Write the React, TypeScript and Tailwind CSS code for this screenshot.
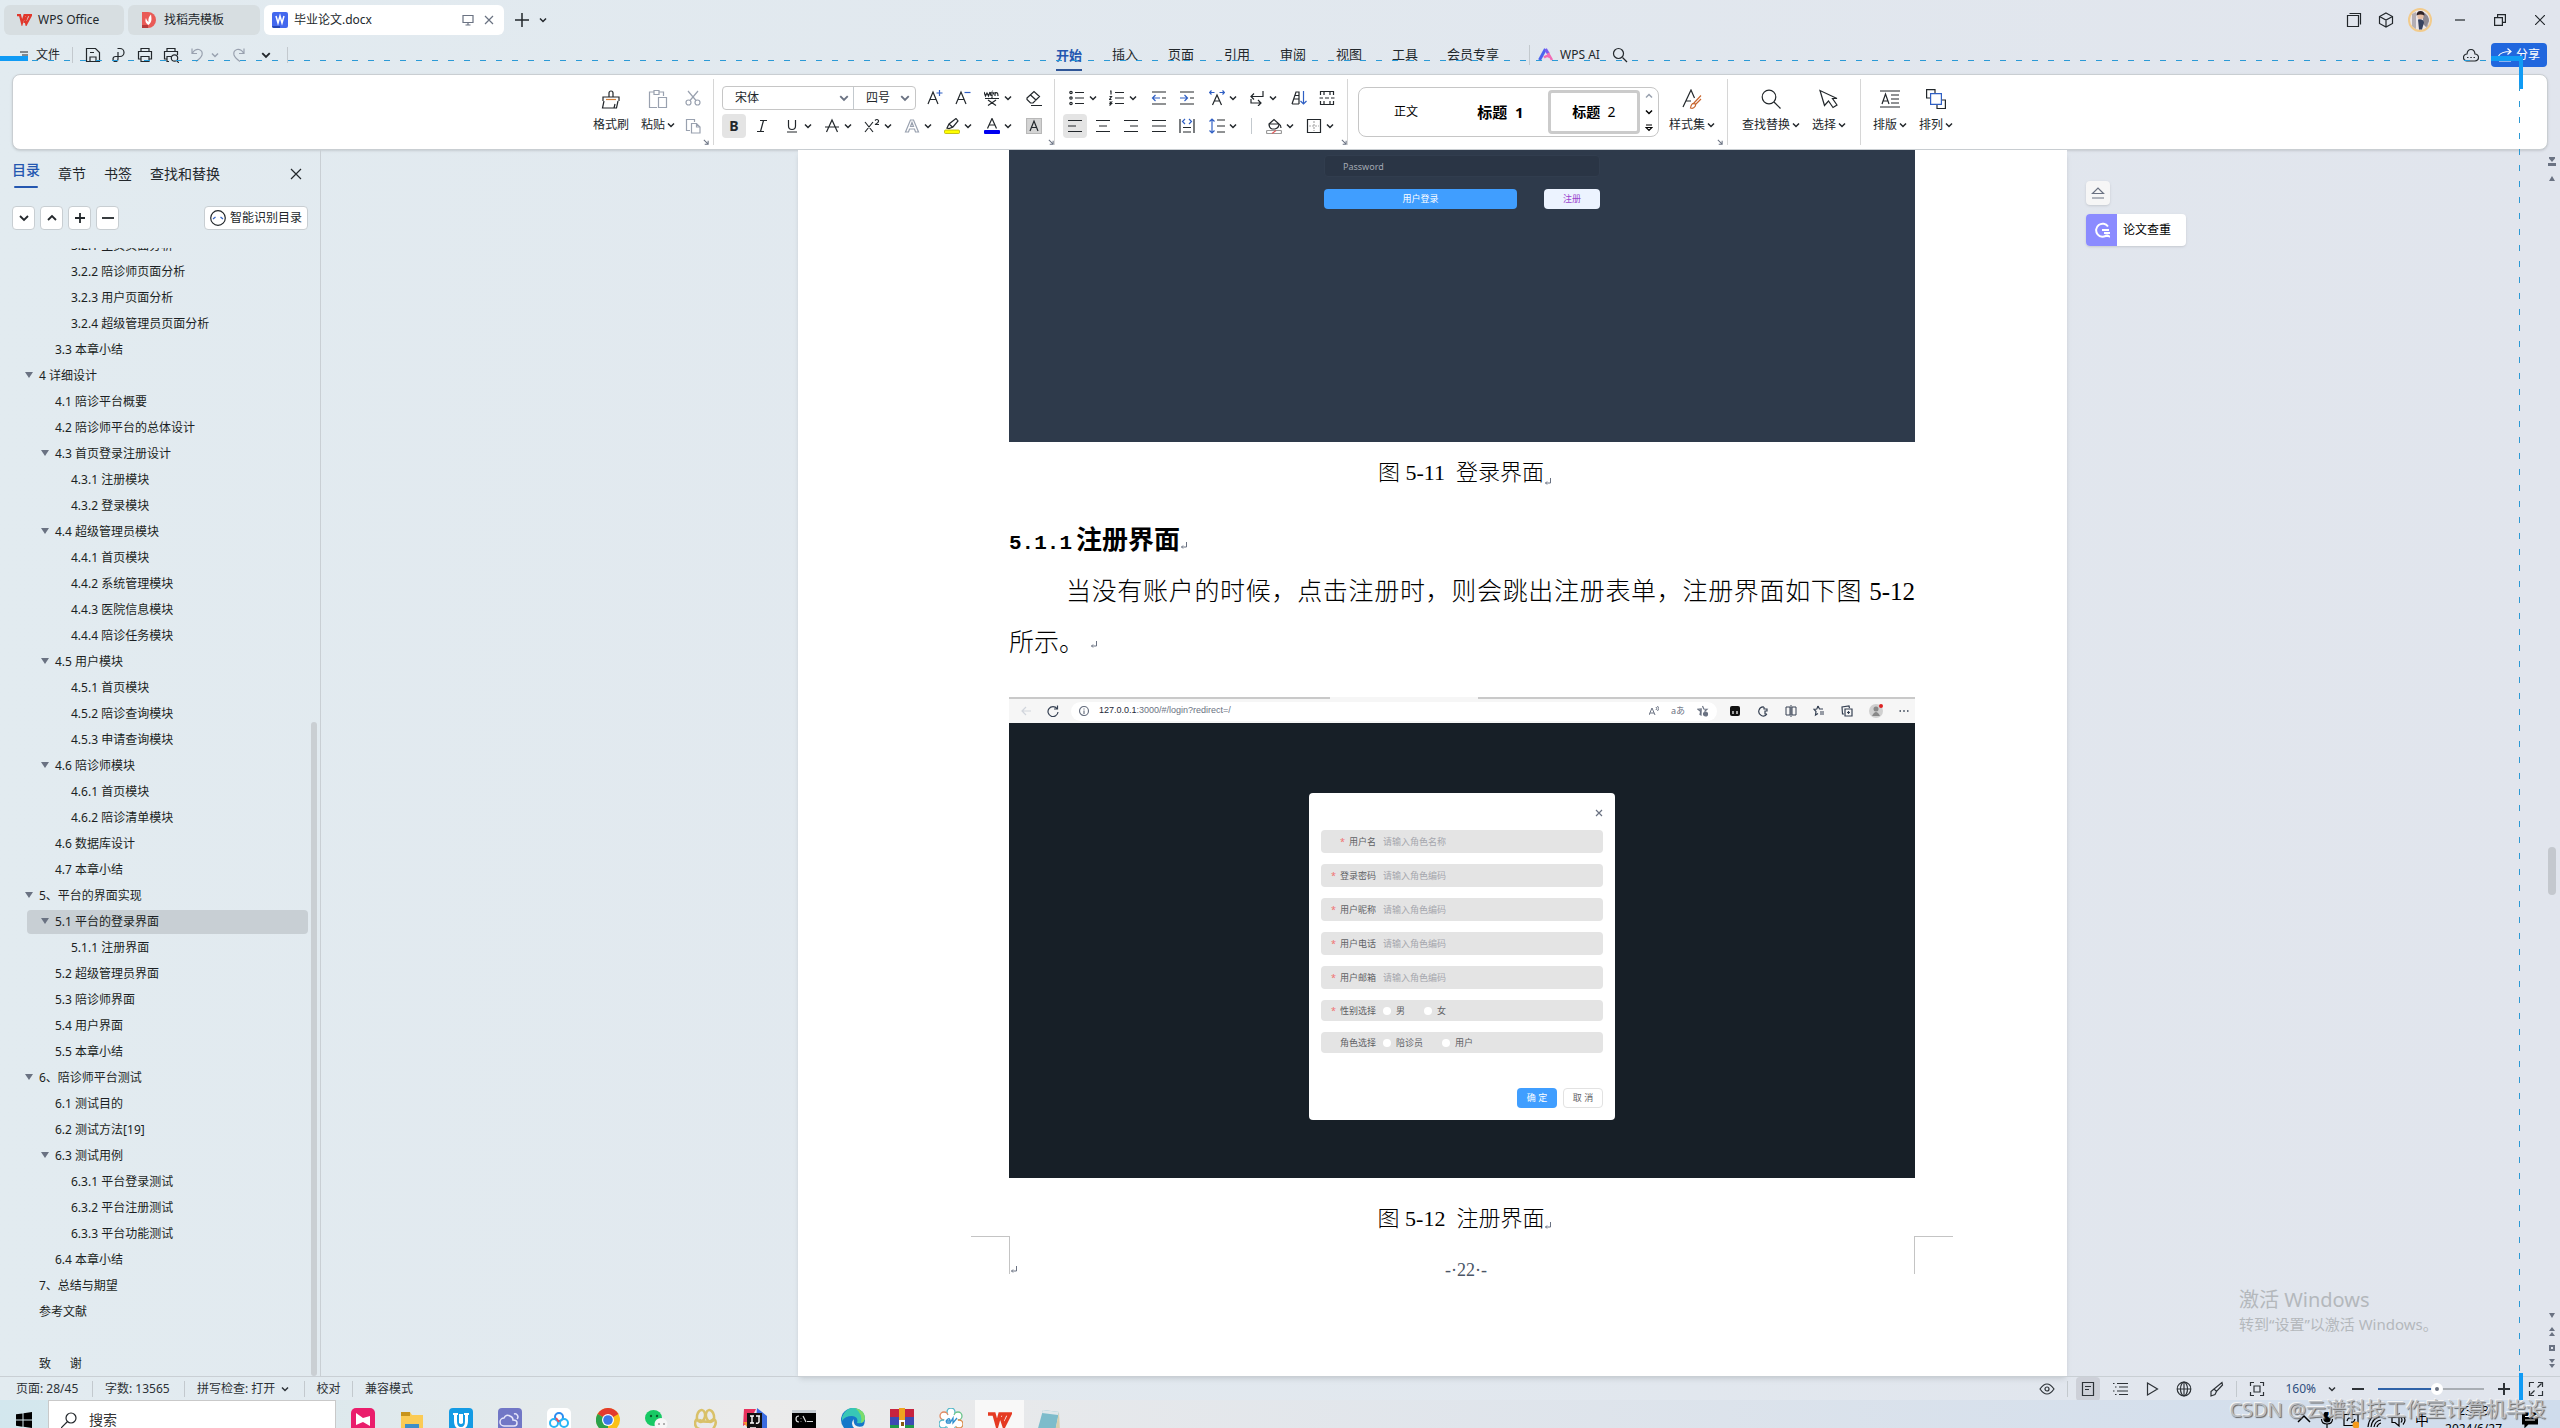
import type { ReactNode } from "react"
import clsx from "clsx"

type IconProps = { children: ReactNode; size?: string; box?: string; className?: string }

const Icon = ({ children, size = "size-5", box = "0 0 20 20", className = "" }: IconProps) => (
  <svg viewBox={box} fill="none" stroke="currentColor" strokeWidth="1.2" className={clsx("shrink-0", size, className)} aria-hidden="true">
    {children}
  </svg>
)

const Chevron = ({ size = "size-2", className = "" }: { size?: string; className?: string }) => (
  <Icon size={size} box="0 0 8 8" className={className}>
    <path d="M1 2.500 4 5.500 7 2.500" strokeWidth="1.500" />
  </Icon>
)

const Corner = () => (
  <Icon size="size-1.5" box="0 0 7 7" className="mb-1 self-end text-gray-500">
    <path d="M1 1 6 6M6 2v4H2" />
  </Icon>
)

const Rule = ({ className = "h-4" }: { className?: string }) => <div className={clsx("w-px shrink-0 bg-[#c3c9ce]", className)} />

// paragraph mark
const Mark = ({ className = "" }: { className?: string }) => (
  <Icon size="size-2" box="0 0 8 8" className={clsx("inline-block text-gray-500", className)}>
    <path d="M6.500 0v5H1.500M3 3.500 1.500 5 3 6.500" strokeWidth="1" />
  </Icon>
)

/* ---------- title bar ---------- */

const TitleBar = () => (
  <div className="flex h-10 shrink-0 items-center pl-1 text-[13px]">
    <div className="flex gap-1">
      <button className="flex h-[30px] w-[120px] items-center gap-1.5 rounded-md bg-[#d7dee1] pl-3 text-xs">
        <Icon size="w-4 h-3" box="0 0 16 12">
          <path d="M1 1.200h3L6 9l2.500-7.800h2.800L8.500 9M8.500 3l1.800 7L15 1.200h-3.500" stroke="#e1382c" strokeWidth="2.200" />
        </Icon>
        WPS Office
      </button>
      <button className="flex h-[30px] w-[132px] items-center gap-2 rounded-md bg-[#d7dee1] pl-3.5 text-xs">
        <Icon size="w-3.5 h-4" box="0 0 14 16">
          <path d="M0 0h6a8 8 0 0 1 0 16H0z" fill="#e95a56" stroke="none" />
          <path d="M0 13h6v3H0z" fill="#b83a3a" stroke="none" />
          <path d="M6.500 13C3 11 3 8 4 6c.5 2 1.500 3 2.500 4C6 7 7 4 9 2.500 9.500 6 10.500 10 6.500 13z" fill="#fff" stroke="none" />
        </Icon>
        找稻壳模板
      </button>
      <div className="flex h-[30px] w-60 items-center rounded-md bg-white pl-2">
        <Icon size="size-4" box="0 0 16 16">
          <rect width="16" height="16" rx="2" fill="#4368ee" stroke="none" />
          <path d="M0 14h8v2H2q-2 0-2-2z" fill="#2446b5" stroke="none" />
          <path d="m4 4 2 7 2-7 2 7 2-7" stroke="#fff" strokeWidth="1.500" />
        </Icon>
        <span className="ml-1.5 flex-1 text-xs">毕业论文.docx</span>
        <Icon size="size-3" box="0 0 12 12" className="text-gray-500">
          <path d="M1 1.500h10v7H1zM3.500 11h5M6 8.500V11" />
        </Icon>
        <button aria-label="关闭文档" className="mx-2.5 text-gray-500">
          <Icon size="size-2.5" box="0 0 10 10"><path d="m1 1 8 8M9 1 1 9" /></Icon>
        </button>
      </div>
    </div>
    <button aria-label="新建" className="ml-[11px]">
      <Icon size="size-3.5" box="0 0 14 14"><path d="M7 0v14M0 7h14" strokeWidth="1.500" /></Icon>
    </button>
    <Chevron className="ml-2.5" />
    <div className="ml-auto flex items-center">
      <Icon size="size-4" box="0 0 16 16" className="mr-4"><path d="M1.500 3.500h11v11h-11zM3.500 1.500h11v11" /></Icon>
      <Icon size="size-4" box="0 0 16 16" className="mr-3.5"><path d="m8 1 6.500 3.500v7L8 15l-6.500-3.500v-7zM1.500 4.500 8 8l6.500-3.500M8 8v7" /></Icon>
      <Icon size="size-6" box="0 0 24 24" className="mr-2">
        <circle cx="12" cy="12" r="11" fill="#ece6e8" stroke="#f2cb8c" strokeWidth="2" />
        <path d="M4 6v12q2 2 4 3V4zM18 8l3 3-1 7-2 2z" fill="#b4aeb4" stroke="none" />
        <path d="M15 4q6 3 6 9l-3 6-3-3z" fill="#8d8891" stroke="none" />
        <circle cx="12.500" cy="8" r="3.200" fill="#e7bfa6" stroke="none" />
        <path d="M8.500 7.500q0-4.500 4-4.500t4 4.500q-4-2-8 0z" fill="#302327" stroke="none" />
        <path d="M10 11.500q5-1 6 3l-2 7h-3z" fill="#38435f" stroke="none" />
      </Icon>
      <button aria-label="最小化" className="flex w-10 justify-center"><Icon size="size-2.5" box="0 0 10 10"><path d="M0 5h10" /></Icon></button>
      <button aria-label="还原" className="flex w-10 justify-center"><Icon size="size-3" box="0 0 12 12"><path d="M.6 3.600h7.800v7.800H.6zM3.600 3.600v-3h7.800v7.800h-3" /></Icon></button>
      <button aria-label="关闭" className="flex w-10 justify-center"><Icon size="size-2.5" box="0 0 10 10"><path d="m0 0 10 10M10 0 0 10" /></Icon></button>
    </div>
  </div>
)

/* ---------- menu row ---------- */

const menus = ["插入", "页面", "引用", "审阅", "视图", "工具", "会员专享"]

const MenuRow = () => (
  <div className="grid h-[34px] shrink-0 grid-cols-[1041fr_600px_919fr] items-start pt-[3px] text-[13px]">
    <div className="flex h-6 items-center pl-5">
      <Icon size="size-2" box="0 0 8 8" className="mr-2"><path d="M0 1h8M2 4h6M0 7h8" /></Icon>
      <button className="w-6 text-xs">文件</button>
      <Rule className="mr-3 ml-3 h-4" />
      <Icon size="size-4" box="0 0 16 16"><path d="M1.500 13.500v-12h9l4 4v9h-13zM5 14.500V10h6v4.500M5 5.500h4" /></Icon>
      <Icon size="size-4" box="0 0 16 16" className="ml-2.5"><path d="M6.500 1.500H9a4 4 0 0 1 0 8H4.500a2.500 2.500 0 1 0 2.500 2.500V5" /></Icon>
      <Icon size="size-4" box="0 0 16 16" className="ml-2.5"><path d="M4 4.500v-3h8v3M4 12H1.500V4.500h13V12H12M4 9.500h8v5H4z" /></Icon>
      <Icon size="size-4" box="0 0 16 16" className="ml-2.5"><path d="M4 4.500v-3h8v3M4 12H1.500V4.500h13V8M6 14.500H4v-5h4M14 14l2 2" /><circle cx="11.500" cy="11" r="3.200" /></Icon>
      <Icon size="size-4" box="0 0 16 16" className="ml-2.5 text-gray-400"><path d="M3 1.500v5h5M3.500 6Q6 1.800 10 2.500q4 1.200 3 5.500-1 3-6 6.500" /></Icon>
      <Chevron className="ml-1.5 text-gray-400" />
      <Icon size="size-4" box="0 0 16 16" className="ml-3 text-gray-400"><path d="M13 1.500v5H8M12.500 6Q10 1.800 6 2.500q-4 1.200-3 5.500 1 3 6 6.500" /></Icon>
      <Chevron size="size-2.5" className="ml-3.5" />
      <Rule className="ml-4 h-4" />
    </div>
    <div className="flex items-start">
      <button className="flex h-7 w-14 flex-col items-center justify-between font-bold text-[#2457b0]">
        <span className="leading-6">开始</span>
        <span className="h-0.5 w-[26px] bg-[#2f5597]" />
      </button>
      {menus.map((m) => (
        <button key={m} className={clsx("flex h-6 items-center justify-center", m.length > 2 ? "w-20" : "w-14")}>{m}</button>
      ))}
      <div className="flex h-6 items-center">
        <Rule className="mr-2 ml-4 h-5" />
        <Icon size="size-4" box="0 0 16 16">
          <path d="m1.500 13 6-11" stroke="#4b63f0" strokeWidth="3" />
          <path d="m7.500 2 3 5" stroke="#7a5cf0" strokeWidth="3" />
          <path d="m10 6 4 7M6 10.500q4-3 6 0" stroke="#f26bb5" strokeWidth="2.500" />
        </Icon>
        <button className="ml-1 h-6 w-11 text-xs whitespace-nowrap">WPS AI</button>
        <Icon size="size-4" box="0 0 16 16" className="ml-2.5"><circle cx="6.500" cy="6.500" r="5" /><path d="m10.500 10.500 4.500 4.500" /></Icon>
      </div>
    </div>
    <div className="flex items-center justify-end gap-3 pr-[13px]">
      <Icon size="size-4" box="0 0 16 16"><path d="M4 14q-3.500-.5-3.500-3.500T4 7q.5-4.500 4-4.500T12 7q3.500.5 3.500 3.500T12 14zM4 10.500h1.500M7.300 10.500h1.500M10.500 10.500H12" /></Icon>
      <button className="flex h-6 w-14 items-center justify-center gap-1 rounded bg-[#2167de] text-xs text-white">
        <Icon size="size-3.5" box="0 0 14 14"><path d="M.5 8Q3 3.500 12.500 3.500M9.500.5l3.500 3-3.500 3M1 13h12" /></Icon>
        分享
      </button>
    </div>
  </div>
)

/* ---------- ribbon ---------- */

const Tool = ({ label, children, wide, on }: { label: string; children: ReactNode; wide?: boolean; on?: boolean }) => (
  <button
    aria-label={label}
    className={clsx("flex h-6 shrink-0 items-center", wide ? "w-10 gap-1 pl-1.5" : on ? "w-6 justify-center rounded bg-[#e4e4e4]" : "w-7 justify-center")}
  >
    {children}
    {wide && <Chevron />}
  </button>
)

const BigTool = ({ label, children, arrow = true }: { label: string; children: ReactNode; arrow?: boolean }) => (
  <button className="flex flex-col items-center gap-1.5">
    {children}
    <span className="flex items-center gap-0.5 text-xs leading-5">
      {label}
      {arrow && <Chevron />}
    </span>
  </button>
)

const S = ({ children, className = "" }: { children: ReactNode; className?: string }) => (
  <Icon size="size-4" box="0 0 16 16" className={className}>{children}</Icon>
)

const blue = "#2f5fc4"

const Ribbon = () => (
  <div className="mx-3 flex h-[76px] shrink-0 items-stretch justify-center rounded-lg border border-[#c9ced2] bg-white pr-4 shadow-sm">
    <div className="flex items-center pl-0.5">
      <BigTool label="格式刷" arrow={false}>
        <Icon><path d="M8 8V4a2 2 0 0 1 4 0v4M2 12V8h16v4M3 12 1.500 19h14L17 12M13 19l1-4" /><path d="M5 10.500h10" stroke="#d3813c" /></Icon>
      </BigTool>
      <div className="ml-3">
        <BigTool label="粘贴">
          <Icon className="text-gray-400"><path d="M6 3H1.500v15.500H9M6 1.500h5v4H6zM11 3h4.500v4M10.500 8.500h8v10h-8z" /></Icon>
        </BigTool>
      </div>
      <div className="ml-2.5 flex flex-col gap-3">
        <S className="text-gray-400"><circle cx="3.500" cy="12.500" r="2.500" /><circle cx="12.500" cy="12.500" r="2.500" /><path d="m3 1 8 9.500M13 1l-8 9.500" /></S>
        <S className="text-gray-400"><path d="M5 12.500H1.500v-11h8V4M6.500 5.500h5l3.500 3.500v6H6.500zM11.500 5.500V9H15" /></S>
      </div>
    </div>
    <div className="flex pl-0.5"><Corner /></div>
    <Rule className="my-1 ml-1 bg-[#d6d6d6]" />

    <div className="flex flex-col justify-center gap-1 pl-2">
      <div className="flex items-center">
        <div className="mr-[5px] flex h-6 w-[194px] items-center rounded border border-[#c6c6c6] text-xs">
          <select aria-label="字体" className="h-full w-[108px] appearance-none pl-3"><option>宋体</option></select>
          <Chevron size="size-2.5" className="mr-1 ml-2 text-gray-500" />
          <Rule className="h-full" />
          <select aria-label="字号" className="h-full w-[46px] appearance-none pl-3"><option>四号</option></select>
          <Chevron size="size-2.5" className="text-gray-500" />
        </div>
        <Tool label="增大字号"><S><path d="m1 14 5-12 5 12M2.800 9.500h6.400" /><path d="M12.500 0v6M9.500 3h6" stroke={blue} /></S></Tool>
        <Tool label="减小字号"><S><path d="m1 14 5-12 5 12M2.800 9.500h6.400" /><path d="M9.500 2.500h6" stroke={blue} /></S></Tool>
        <div className="pl-px"><Tool label="拼音指南" wide><S><path d="m0 2 1.500 4L3 3l1.500 3L6 2M6.500 4h3q0-2-1.500-2T6.500 4 9 6M11 6V2M11 3.500Q14 1 14 6M8 0l2-1M1 8.500h14M8 7v1.500M4 10l8 5.500M12 10l-8 5.500" /></S></Tool></div>
        <div className="pl-0.5"><Tool label="清除格式"><S><path d="m1 8 7-6.500 5.500 5L7 13H4.500L1 9.500zM4.500 5 10 10M5 15.500h11" /></S></Tool></div>
      </div>
      <div className="flex items-center">
        <Tool label="加粗" on><span className="text-sm font-bold">B</span></Tool>
        <div className="px-0.5"><Tool label="倾斜"><S><path d="M6 2.500h7M3 13.500h7M9.500 2.500l-3 11" /></S></Tool></div>
        <Tool label="下划线" wide><S><path d="M4.500 2v6q0 3.500 3.500 3.500T11.500 8V2M3 14h10" /></S></Tool>
        <Tool label="删除线" wide><S><path d="M2.500 14 8 2l5.500 12M1 9h14" /></S></Tool>
        <Tool label="上标" wide><S><path d="m1 4 8 10M9 4 1 14M11 2.500q2-2 3.500 0 .5 2-3.500 4h4" /></S></Tool>
        <Tool label="文字效果" wide><S className="text-gray-400"><path d="M1.500 14 6.500 2h3l5 12h-3l-1-3h-5l-1 3zM6.500 8.500h3L8 4.500z" /></S></Tool>
        <Tool label="突出显示" wide><S><path d="m3 10 2-4 7-5.500 2 2.500-5 6-4 1.500zM5 6l4 3.500" /><rect x=".5" y="12" width="15" height="3.500" rx="1" fill="#ffff00" stroke="#b8b000" strokeWidth=".8" /></S></Tool>
        <Tool label="字体颜色" wide><S><path d="m3.500 10.500 4.500-10 4.500 10M5 7h6" /><rect y="12" width="16" height="4" rx="1" fill="#0000f0" stroke="none" /></S></Tool>
        <div className="pl-0.5"><Tool label="字符底纹"><S><path d="M.5.500h15v15H.500z" fill="#d4d4d4" stroke="#b8b8b8" /><path d="m4 13 4-10 4 10M5.500 9.500h5" /></S></Tool></div>
      </div>
    </div>
    <Corner />
    <Rule className="my-1 bg-[#d6d6d6]" />

    <div className="flex flex-col justify-center gap-1 pl-2">
      <div className="flex items-center">
        <Tool label="项目符号" wide><S><path d="M6 2.500h9M6 8h9M6 13.500h9" /><circle cx="2" cy="2.500" r="1.200" /><circle cx="2" cy="8" r="1.200" /><circle cx="2" cy="13.500" r="1.200" /></S></Tool>
        <Tool label="编号" wide><S><path d="M6 2.500h9M6 8h9M6 13.500h9M1 1h1v3.500M.5 6.500h2L.5 9.500h2M.5 12h2L1 13.500h1.500L.5 15.500" /></S></Tool>
        <div className="pl-0.5"><Tool label="减少缩进"><S><path d="M1 2h14M11 8h4M1 14h14" /><path d="M9 8H1.500M4.500 5l-3 3 3 3" stroke={blue} /></S></Tool></div>
        <Tool label="增加缩进"><S><path d="M1 2h14M11 8h4M1 14h14" /><path d="M1 8h7.500M5.500 5l3 3-3 3" stroke={blue} /></S></Tool>
        <div className="pl-0.5"><Tool label="中文版式" wide><S><path d="m3.500 15 4.500-10 4.500 10M5 11h6" /><path d="M5.500 2.500H.5M2.500.5l-2 2 2 2M10.500 2.500h5M13.500.5l2 2-2 2" stroke={blue} /></S></Tool></div>
        <Tool label="换行" wide><S><path d="M14 1v5.500H2M5 3.500l-3 3 3 3M2 9v4h10M9 10l3 3-3 3" /></S></Tool>
        <div className="pl-0.5"><Tool label="排序"><S><path d="M1 14 5 2h3v12M2.500 9H8M4 5.500h4M1 14h7" /><path d="M12.500 1v13M9.500 11l3 3 3-3" stroke={blue} /></S></Tool></div>
        <Tool label="边框显示"><S><path d="M1.500 5V1.500H14.500V5M1.500 11v3.500h13V11M5 1.500V5M11 1.500V5M5 14.500V11M11 14.500V11M.5 8H4M6 8h4M12 8h3.500" /></S></Tool>
      </div>
      <div className="flex items-center">
        <Tool label="左对齐" on><S><path d="M1 2.500h14M1 8h8M1 13.500h14" /></S></Tool>
        <div className="pl-0.5"><Tool label="居中"><S><path d="M1 2.500h14M4 8h8M1 13.500h14" /></S></Tool></div>
        <Tool label="右对齐"><S><path d="M1 2.500h14M7 8h8M1 13.500h14" /></S></Tool>
        <Tool label="两端对齐"><S><path d="M1 2.500h14M1 8h14M1 13.500h14" /></S></Tool>
        <Tool label="分散对齐"><S><path d="M1 1v14M15 1v14M4 9.500h8M4 14h8" /><path d="m6 1-2.500 2.500L6 6M10 1l2.500 2.500L10 6" stroke={blue} /></S></Tool>
        <div className="pl-0.5"><Tool label="行距" wide><S><path d="M8 2h8M8 8h8M8 14h8" /><path d="M3 1v14M.5 3.500 3 1l2.500 2.500M.5 12.500 3 15l2.500-2.500" stroke={blue} /></S></Tool></div>
        <Rule className="mx-2 h-4" />
        <Tool label="底纹" wide><S><path d="m3 6 5-4.500L13 6q0 4-4 5H6Q3 10 3 6zM3 6h10M13 6q2 1 2 4" /><rect x=".5" y="12.500" width="15" height="3" rx="1" stroke="#999" /><path d="m6 15.500 4-3" stroke="#e05a5a" /></S></Tool>
        <Tool label="边框" wide><S><path d="M1.500 1.500h13v13h-13z" /><path d="M8 3v10M3 8h10" stroke="#aaa" strokeDasharray="2 1" /></S></Tool>
      </div>
    </div>
    <Corner />
    <Rule className="my-1 bg-[#d6d6d6]" />

    <div className="my-3 ml-2.5 flex w-[301px] items-center rounded-lg border border-[#c6c6c6] text-xs text-black">
      <button className="w-[94px]">正文</button>
      <button className="flex-1 text-[15px] font-bold">标题&nbsp;&nbsp;1</button>
      <button className="h-11 w-[92px] rounded border-3 border-[#cbcbcb] text-sm"><b>标题</b>&nbsp;&nbsp;2</button>
      <div className="flex w-[18px] flex-col items-center gap-2">
        <Chevron className="rotate-180 text-gray-400" />
        <Chevron />
        <Icon size="size-2" box="0 0 8 8"><path d="M1 1h6M1 3.500h6L4 6.500z" /></Icon>
      </div>
    </div>
    <div className="flex items-center pr-0.5 pl-2.5">
      <BigTool label="样式集">
        <Icon><path d="m1 18 8-17 3.500 8M4 12h5" /><path d="M19 6.500 11 15M19 10l-6 6M8.500 19q1-5 3.500-4.500t1 3-4.500 1.500z" stroke="#c9662f" /></Icon>
      </BigTool>
    </div>
    <Corner />
    <Rule className="my-1 ml-1 bg-[#d6d6d6]" />
    <div className="flex items-center gap-3 px-3.5">
      <BigTool label="查找替换"><Icon><circle cx="8" cy="8" r="6.800" /><path d="m13 13 6.500 6.500" /></Icon></BigTool>
      <BigTool label="选择"><Icon><path d="m1 1.500 4.500 15 4-4.500 4.500 6.500 4-2.500-4.500-6.500h4.500z" /></Icon></BigTool>
    </div>
    <Rule className="my-1 bg-[#d6d6d6]" />
    <div className="flex items-center gap-3 pl-3">
      <BigTool label="排版"><Icon><path d="M0 2h20M0 18h20M2 15 5.500 5 9 15M3 12h5M11 6h8M11 10h8M11 14h8" /></Icon></BigTool>
      <BigTool label="排列"><Icon><path d="M4.500 9H.6V.6H9v4M11 15.500v4h8.400V11h-4" /><path d="M4.600 4.600h10.800v10.800H4.600z" stroke={blue} /></Icon></BigTool>
    </div>
  </div>
)

/* ---------- outline sidebar ---------- */

type Node = [level: number, text: string, open?: boolean]

const outline: Node[] = [
  [2, "3.2.1 主页页面分析"],
  [2, "3.2.2 陪诊师页面分析"],
  [2, "3.2.3 用户页面分析"],
  [2, "3.2.4 超级管理员页面分析"],
  [1, "3.3 本章小结"],
  [0, "4 详细设计", true],
  [1, "4.1 陪诊平台概要"],
  [1, "4.2 陪诊师平台的总体设计"],
  [1, "4.3 首页登录注册设计", true],
  [2, "4.3.1 注册模块"],
  [2, "4.3.2 登录模块"],
  [1, "4.4 超级管理员模块", true],
  [2, "4.4.1 首页模块"],
  [2, "4.4.2 系统管理模块"],
  [2, "4.4.3 医院信息模块"],
  [2, "4.4.4 陪诊任务模块"],
  [1, "4.5 用户模块", true],
  [2, "4.5.1 首页模块"],
  [2, "4.5.2 陪诊查询模块"],
  [2, "4.5.3 申请查询模块"],
  [1, "4.6 陪诊师模块", true],
  [2, "4.6.1 首页模块"],
  [2, "4.6.2 陪诊清单模块"],
  [1, "4.6 数据库设计"],
  [1, "4.7 本章小结"],
  [0, "5、平台的界面实现", true],
  [1, "5.1 平台的登录界面", true],
  [2, "5.1.1 注册界面"],
  [1, "5.2 超级管理员界面"],
  [1, "5.3 陪诊师界面"],
  [1, "5.4 用户界面"],
  [1, "5.5 本章小结"],
  [0, "6、陪诊师平台测试", true],
  [1, "6.1 测试目的"],
  [1, "6.2 测试方法[19]"],
  [1, "6.3 测试用例", true],
  [2, "6.3.1 平台登录测试"],
  [2, "6.3.2 平台注册测试"],
  [2, "6.3.3 平台功能测试"],
  [1, "6.4 本章小结"],
  [0, "7、总结与期望"],
  [0, "参考文献"],
  [0, ""],
  [0, "致      谢"],
]

const indents = ["pl-6", "pl-10", "pl-14"]

const Sidebar = () => (
  <aside className="flex w-[321px] shrink-0 flex-col border-r border-[#c9cfd4]">
    <div className="flex h-12 items-center gap-[18px] pl-3 text-sm">
      <button className="flex h-7 flex-col items-center justify-between font-medium text-[#2457b0]">
        <span>目录</span>
        <span className="h-0.5 w-6 rounded bg-[#2457b0]" />
      </button>
      <button>章节</button>
      <button>书签</button>
      <button>查找和替换</button>
      <button aria-label="关闭目录" className="mr-[18px] ml-auto">
        <Icon size="size-3" box="0 0 12 12"><path d="m1 1 10 10M11 1 1 11" /></Icon>
      </button>
    </div>
    <div className="flex h-10 items-center gap-[5px] pr-3 pl-3">
      {[
        ["展开", "M2 4l4 4 4-4"],
        ["收起", "M2 8l4-4 4 4"],
        ["增加级别", "M6 1v10M1 6h10"],
        ["降低级别", "M0 6h12"],
      ].map(([label, d]) => (
        <button key={label} aria-label={label} className="flex h-6 w-[23px] items-center justify-center rounded border border-[#c8ced2] bg-white">
          <Icon size="size-3" box="0 0 12 12"><path d={d} strokeWidth="1.800" /></Icon>
        </button>
      ))}
      <button className="ml-auto flex h-6 items-center gap-1 rounded border border-[#c8ced2] bg-white px-[5px] text-xs">
        <Icon size="size-4" box="0 0 16 16"><circle cx="8" cy="8" r="7.300" /><path d="M3 9l2.500-2M13 9l-2.500-2" stroke={blue} /></Icon>
        智能识别目录
      </button>
    </div>
    <div className="mt-2.5 flex min-h-0 flex-1 overflow-hidden">
      <ul className="-mt-[15px] flex-1 pl-[15px] text-xs whitespace-pre text-[#1b1f23]">
        {outline.map(([level, text, open], i) => (
          <li key={i} className={clsx("flex h-[26px] items-center", indents[level])}>
            <button className={clsx("relative text-left", text.startsWith("5.1 ") && "-mr-1 -ml-7 h-6 flex-1 rounded bg-[#c8cfd4] pl-7")}>
              {text}
              {open && (
                <svg viewBox="0 0 8 6" className={clsx("absolute h-1.5 w-2 fill-gray-500", text.startsWith("5.1 ") ? "top-2 left-3.5" : "top-1 -left-3.5")} aria-hidden="true">
                  <path d="M0 0h8L4 6z" />
                </svg>
              )}
            </button>
          </li>
        ))}
      </ul>
      <div className="flex w-4 flex-col justify-end pl-[7px]">
        <div className="h-[58%] w-1.5 rounded bg-[#cacfd3]" />
      </div>
    </div>
  </aside>
)

/* ---------- document ---------- */

const LoginShot = () => (
  <div className="flex h-[292px] flex-col items-center bg-[#2e3a4b] pt-[5px] font-['Noto_Sans','Noto_Sans_CJK_SC',sans-serif] text-[9px] font-normal">
    <div className="w-[276px]">
      <input aria-label="密码" placeholder="Password" className="block h-[22px] w-full rounded border border-[#313d4e] bg-[#2a3545] pl-4.5 placeholder:text-[#a3a9b3]" />
      <div className="mt-3 flex justify-between">
        <button className="h-5 w-[193px] rounded-sm bg-[#409eff] text-white">用户登录</button>
        <button className="h-5 w-14 rounded-sm bg-[#ecf3ff] text-[#9b45cf]">注册</button>
      </div>
    </div>
  </div>
)

const fields = [
  ["用户名", "请输入角色名称"],
  ["登录密码", "请输入角色编码"],
  ["用户昵称", "请输入角色编码"],
  ["用户电话", "请输入角色编码"],
  ["用户邮箱", "请输入角色编码"],
]

const Star = () => <span className="mr-1 text-[#f07070]">*</span>

const RegisterForm = () => (
  <form className="h-[327px] w-[306px] rounded-sm bg-white px-3 pt-3.5 text-[#5f6165]">
    <div className="flex h-[23px] justify-end pt-0.5 text-gray-500">
      <Icon size="size-2" box="0 0 8 8"><path d="m1 1 6 6M7 1 1 7" /></Icon>
    </div>
    <div className="flex flex-col gap-[11px]">
      {fields.map(([label, hint], i) => (
        <label key={label} className="flex h-[23px] items-center rounded bg-[#e4e4e4]">
          <span className="w-[55px] text-right whitespace-nowrap"><Star />{label}</span>
          <input name={`field${i}`} placeholder={hint} className="ml-[7px] min-w-0 flex-1 bg-transparent placeholder:text-[#a4a6ad]" />
        </label>
      ))}
      {[
        ["性别选择", "男", "女"],
        ["角色选择", "陪诊员", "用户"],
      ].map(([label, ...options], i) => (
        <div key={label} role="radiogroup" aria-label={label} className="flex h-[21px] items-center rounded bg-[#e4e4e4]">
          <span className="w-[55px] text-right whitespace-nowrap">{i === 0 && <Star />}{label}</span>
          {options.map((o) => (
            <label key={o} className="mr-3 ml-[7px] flex items-center gap-[5px]">
              <input type="radio" name={label} className="size-2 appearance-none rounded-full bg-white" />
              {o}
            </label>
          ))}
        </div>
      ))}
    </div>
    <div className="mt-[35px] flex justify-end gap-1.5">
      <button type="button" className="h-5 w-10 rounded-sm bg-[#409eff] text-white">确 定</button>
      <button type="button" className="h-5 w-10 rounded-sm border border-[#e2e2e2]">取 消</button>
    </div>
  </form>
)

const BrowserBar = () => (
  <div className="flex h-[26px] flex-col bg-[#f6f6f6] text-gray-500">
    <div className="flex h-0.5 justify-between bg-[#c9c9c9] pl-[321px]">
      <div className="w-[148px] bg-[#f6f6f6]" />
    </div>
    <div className="flex flex-1 items-center">
      <Icon size="size-2.5" box="0 0 10 10" className="ml-3 text-gray-300"><path d="M10 5H1M5 1 1 5l4 4" /></Icon>
      <Icon size="size-3" box="0 0 12 12" className="ml-4 text-gray-700"><path d="M10 3.500A5 5 0 1 0 11 7M10.500.5v3.500H7" /></Icon>
      <div className="mr-3 ml-3 flex h-[19px] flex-1 items-center rounded-full bg-white px-2">
        <Icon size="size-2.5" box="0 0 10 10" className="mr-2.5"><circle cx="5" cy="5" r="4.500" /><path d="M5 4.500V8M5 2.500v1" /></Icon>
        <span className="flex-1 font-['Liberation_Sans',sans-serif]"><span className="text-gray-800">127.0.0.1</span>:3000/#/login?redirect=/</span>
        <div className="flex items-center gap-3">
          <Icon size="size-2.5" box="0 0 10 10"><path d="m0 9 3-7 3 7M1 7h4M7 1q1.500 1.500 0 3M8.500 0q2.500 2.500 0 5" strokeWidth="1" /></Icon>
          <span>aあ</span>
          <Icon size="size-3" box="0 0 12 12"><path d="m5.500 1 1.300 3 3.200.3L7.500 6.500M4 10l-1-.5.700-3L1 4.300 4.200 4z" /><circle cx="8.500" cy="9" r="2" fill="currentColor" /></Icon>
        </div>
      </div>
      <div className="mr-1.5 flex items-center gap-4 text-gray-700">
        <Icon size="size-3" box="0 0 12 12"><rect x="1" y="1" width="10" height="10" rx="2" fill="#111" stroke="none" /><path d="M4 6v3M8 6v3" stroke="#fff" /></Icon>
        <Icon size="size-3" box="0 0 12 12"><path d="M7 2a4.500 4.500 0 1 0 3 7M7 2v2h3v2H8v3h2" /></Icon>
        <Icon size="size-3" box="0 0 12 12"><path d="M1 2h4v8H1zM7 2h4v8H7zM6 0v12" strokeWidth="1" /></Icon>
        <Icon size="size-3" box="0 0 12 12"><path d="M5 1 3.800 4 1 4.300 3 6.500 2.500 10 5 8.500M5 1l1.500 3H10M7 7h4M7 9h4" /></Icon>
        <Icon size="size-3" box="0 0 12 12"><path d="M3 9H1.500L1 2l7-1 .5 2M4 4h7v7H4zM7.500 6v3M6 7.500h3" /></Icon>
        <Icon size="size-3.5" box="0 0 14 14"><circle cx="7" cy="7" r="7" fill="#cfcfcf" stroke="none" /><circle cx="7" cy="5" r="2.500" fill="#888" stroke="none" /><path d="M3 12q4-8 8 0z" fill="#888" stroke="none" /><circle cx="12" cy="2" r="2" fill="#d22" stroke="none" /></Icon>
        <Icon size="size-2.5" box="0 0 10 10"><path d="M.5 5H2M4.200 5h1.600M8 5h1.500" strokeWidth="1.500" /></Icon>
      </div>
    </div>
  </div>
)

const captionClass = "flex items-center justify-center pl-1.5 text-[22px]"

const Page = () => (
  <article className="w-[1269px] shrink-0 overflow-hidden bg-white pr-[152px] pl-[211px] font-['Liberation_Serif','Noto_Sans_CJK_SC',serif] font-light text-black shadow-md">
    <LoginShot />
    <p className={clsx(captionClass, "h-[60px]")}>图&nbsp;5-11&nbsp;&nbsp;登录界面<Mark className="mb-4 self-end" /></p>
    <h2 className="mt-3 flex h-13 items-center text-[26px] font-bold">
      <span className="flex items-baseline">
        <span className="mr-1 font-['Liberation_Mono',monospace] text-[21px]">5.1.1</span>注册界面
      </span>
      <Mark className="mb-4 self-end" />
    </h2>
    <p className="text-justify indent-[57px] text-[25px] leading-[51px]">
      当没有账户的时候，点击注册时，则会跳出注册表单，注册界面如下图&nbsp;5-12所示。 <Mark />
    </p>
    <div className="mt-[29px] bg-[#171f27] font-['Noto_Sans','Noto_Sans_CJK_SC',sans-serif] text-[9px] font-normal">
      <BrowserBar />
      <div className="flex h-[455px] justify-center pt-[70px]"><RegisterForm /></div>
    </div>
    <p className={clsx(captionClass, "mt-[22px] h-9")}>图&nbsp;5-12&nbsp;&nbsp;注册界面<Mark className="mb-1.5 self-end" /></p>
    <div className="-mx-[38px] flex h-[38px] items-end justify-between">
      <div className="h-full w-[39px] border-t border-r border-[#c4c4c4]" />
      <Mark className="mr-auto" />
      <span className="mr-auto -mb-2.5 text-[18px] text-gray-600">-·22·-</span>
      <div className="h-full w-[39px] border-t border-l border-[#c4c4c4]" />
    </div>
  </article>
)

const Arrow = ({ d }: { d: string }) => (
  <svg viewBox="0 0 8 10" className="h-2.5 w-2 fill-gray-500" aria-hidden="true"><path d={d} fillRule="evenodd" /></svg>
)

const Workspace = () => (
  <main className="flex min-w-0 flex-1">
    <div className="flex-1 pl-[21px]" />
    <Page />
    <div className="flex flex-1 flex-col items-start gap-[9px] pt-[31px] pl-[19px]">
      <button aria-label="收起面板" className="flex size-6 items-center justify-center rounded bg-[#f6f6f6] text-gray-500 shadow-sm">
        <Icon size="size-3.5" box="0 0 14 14"><path d="m1.500 7.500 5.500-5.500 5.500 5.500zM1 12h12" /></Icon>
      </button>
      <button className="flex h-8 w-[100px] items-center overflow-hidden rounded bg-white text-xs text-black shadow">
        <span className="flex h-full w-[31px] items-center justify-center bg-[#8b8bff]">
          <Icon size="size-4" box="0 0 16 16" className="text-white"><path d="M14 4.500A6.500 6.500 0 1 0 13 13M8 8h7M10 11h6M13 13l3 2" strokeWidth="2" /></Icon>
        </span>
        <span className="ml-1.5">论文查重</span>
      </button>
      <div className="mt-auto mb-[42px] ml-auto w-[303px] text-[#b4b8bc]">
        <p className="text-xl leading-7">激活 Windows</p>
        <p className="text-[15px] leading-5">转到“设置”以激活 Windows。</p>
      </div>
    </div>
    <div className="flex w-[18px] flex-col items-center gap-1.5 pt-[7px] pb-[7px] pl-0.5">
      <Arrow d="M1 0h6v1.500L4 5 1 1.500zM0 6h8v3H0z" />
      <Arrow d="M4 3 7 8H1z" />
      <div className="flex-[672]" />
      <div className="h-12 w-2 rounded bg-[#c4c8ce]" />
      <div className="flex-[416]" />
      <Arrow d="M1 2h6L4 7z" />
      <Arrow d="m4 0 3 4H1zM4 5l3 4H1z" />
      <Arrow d="M1 2h6v6H1zM3 4v2h2V4z" />
      <Arrow d="M1 0h6L4 4zM1 5h6L4 9z" />
    </div>
  </main>
)

/* ---------- status bar ---------- */

const StatusBar = () => (
  <footer className="flex h-6 shrink-0 items-center border-t border-[#c9cfd4] pr-4 pl-4 text-xs text-[#2d3237]">
    <span className="w-[76px]">页面: 28/45</span>
    <Rule />
    <span className="w-[91px] pl-3">字数: 13565</span>
    <Rule />
    <button className="flex w-[119px] items-center gap-1.5 pl-3">拼写检查: 打开 <Chevron /></button>
    <Rule />
    <button className="w-[47px]">校对</button>
    <Rule />
    <button className="w-[72px]">兼容模式</button>
    <div className="ml-auto flex items-center">
      <S className="mr-3"><path d="M1 8q7-10 14 0-7 10-14 0z" /><circle cx="8" cy="8" r="2" /></S>
      <Rule />
      <button aria-label="页面视图" className="mr-3 ml-2 flex h-6 w-6 items-center justify-center rounded bg-[#cdd0d8]">
        <S><path d="M2.500 1.500h11v13h-11zM5 5.500h6M5 8.500h4" /></S>
      </button>
      <S><path d="M5 2.500h11M7 6h9M5 10h11M7 13.500h9M1 2.500h1.500M3 6h1.500M1 10h1.500M3 13.500h1.500" /></S>
      <S className="ml-4"><path d="m3.500 2 10 6-10 6z" /></S>
      <S className="ml-4"><circle cx="8" cy="8" r="6.800" /><path d="M1 8h14M8 1v14" /><ellipse cx="8" cy="8" rx="3.500" ry="6.800" /></S>
      <S className="mr-3 ml-4"><path d="M14 1.500 6 8l2.500 2.500L14.500 4zM6 8l-3 2.500V15l4-1.500 1.500-3" /></S>
      <Rule />
      <S className="ml-3"><path d="M1.500 5V1.500H5M11 1.500h3.500V5M14.500 11v3.500H11M5 14.500H1.500V11M5 5h6v6H5z" /></S>
      <span className="ml-5 text-[#2f4f80]">160%</span>
      <Chevron className="ml-3" />
      <button aria-label="缩小" className="ml-4"><Icon size="size-3" box="0 0 12 12"><path d="M0 6h12" strokeWidth="2" /></Icon></button>
      <input
        type="range"
        aria-label="缩放"
        defaultValue={56}
        className="mx-3.5 h-3 w-[106px] appearance-none bg-linear-to-r from-[#2f62a8] from-56% to-[#a9aeb4] to-56% bg-size-[100%_2px] bg-center bg-no-repeat [&::-webkit-slider-thumb]:size-3 [&::-webkit-slider-thumb]:appearance-none [&::-webkit-slider-thumb]:rounded-full [&::-webkit-slider-thumb]:border-4 [&::-webkit-slider-thumb]:border-white [&::-webkit-slider-thumb]:bg-gray-500"
      />
      <button aria-label="放大"><Icon size="size-3" box="0 0 12 12"><path d="M0 6h12M6 0v12" strokeWidth="2" /></Icon></button>
      <S className="ml-[18px]"><path d="M6 1.500H1.500V6M10 14.500h4.500V10M10 1.500h4.500V6M1.500 10v4.500H6M9.500 6.500l4-4M2.500 13.500l4-4" /></S>
    </div>
  </footer>
)

/* ---------- taskbar ---------- */

const apps: ReactNode[] = [
  <><rect width="24" height="24" rx="5" fill="#ea1d6b" /><path d="m5 5 7 5 7-2v10l-7-4-7 3z" fill="#fff" /></>,
  <><path d="M1 4h9l2 3h11v17H1z" fill="#fbcb55" /><path d="M1 4h9v4H1z" fill="#c8941c" /><path d="M5 24v-8h14v8h-4v-4H9v4z" fill="#3f8fc9" /></>,
  <><rect width="24" height="24" rx="4" fill="#149be4" /><path d="M4 5h5v2H8v6q0 6 4 6t4-6V7h-1V5h5v2h-1v6q0 8-7 8t-7-8V7H4z" fill="#fff" /><path d="M10 6h4v9q-2 2-4 0z" fill="#fff" /></>,
  <><rect width="24" height="24" rx="4" fill="#7177c6" /><path d="M6 18a4 4 0 0 1 0-8q2-4 6-2 3 1 3 4 4 0 4 3t-3 3zM16 6a3 3 0 0 1 3 5" fill="none" stroke="#e6e6fa" strokeWidth="1.500" /></>,
  <><rect width="24" height="24" rx="5" fill="#fff" /><circle cx="12" cy="9" r="4" fill="none" stroke="#2b8bf0" strokeWidth="2" /><circle cx="7" cy="15" r="4" fill="none" stroke="#29b6f6" strokeWidth="2" /><circle cx="17" cy="15" r="4" fill="none" stroke="#29b6f6" strokeWidth="2" /><path d="m9 10 3 4" stroke="#ef4c5c" strokeWidth="2" /></>,
  <><circle cx="12" cy="12" r="12" fill="#fbc116" /><path d="M12 12 1.600 6a12 12 0 0 1 20.800 0z" fill="#e33b2e" /><path d="M12 12 1.600 6A12 12 0 0 0 12 24z" fill="#2ba24c" /><circle cx="12" cy="12" r="6" fill="#fff" /><circle cx="12" cy="12" r="4.800" fill="#3b78e7" /></>,
  <><ellipse cx="8.500" cy="10" rx="8.500" ry="8" fill="#17c964" /><circle cx="6" cy="8" r="1.200" fill="#0a5c2c" /><circle cx="12" cy="8" r="1.200" fill="#0a5c2c" /><ellipse cx="16" cy="16" rx="6.500" ry="6" fill="#f6f6f6" /><circle cx="14" cy="16" r="1" fill="#999" /><circle cx="19" cy="16" r="1" fill="#999" /></>,
  <g fill="none" stroke="#d9c169" strokeWidth="2.500"><ellipse cx="7" cy="8" rx="4" ry="6" transform="rotate(12 7 8)" /><ellipse cx="16" cy="8" rx="4" ry="6" transform="rotate(-12 16 8)" /><path d="M3 11q-4 4 0 9l7 3 9-2q5-7 1-10-5 5-15 1" /></g>,
  <><path d="M1 1h12l-6 12-7 5z" fill="#e8325e" /><path d="m14 0 10 8v16H12z" fill="#3a6be0" /><path d="M0 14h8v10z" fill="#f7942e" /><path d="M4 5h15v19H4z" fill="#111" /><path d="M7 8h4M9 8v7M7 15h4M13 8h4M16 8v6q-1 2-3 1M7 20h6" stroke="#fff" strokeWidth="1.400" fill="none" /></>,
  <><path d="M0 3h24v21H0z" fill="#000" /><path d="M0 2h24v3H0z" fill="#c5ccd2" /><path d="M7 8q-3 0-3 3t3 3M9 10v.5M9 13v.5M11 8l3 6M15 13.500h6" stroke="#ddd" fill="none" strokeWidth="1.200" /></>,
  <><circle cx="12" cy="12" r="12" fill="#1577c9" /><path d="M1 9Q5-1 14 0q10 2 10 11-1 5-8 4 2-6-5-7-7 0-10 5z" fill="#37c6b6" /><path d="M14 0q10 2 10 11-1 3-4 4Q22 6 14 0z" fill="#7cdc6a" /><path d="M13 11q-4 4 0 9 5 3 10-2-6 2-9-1-2-3-1-6z" fill="#f0f0f0" /></>,
  <><path d="M0 1h24v8H0z" fill="#c6233f" /><path d="M0 9h24v8H0z" fill="#3b4bb3" /><path d="M0 17h24v7H0z" fill="#1f9a4a" /><path d="M9 0h6v24H9z" fill="#eda41f" /><path d="M9 12h6v8H9z" fill="#fff" /><path d="M11 14h3v4h-3z" fill="#8a5a10" /></>,
  <g fill="#fff" stroke="#55b7c9" strokeWidth="1.300"><circle cx="12" cy="4" r="4" /><circle cx="19" cy="8" r="4" stroke="#6bc48b" /><circle cx="20" cy="16" r="4" stroke="#d98b4a" /><circle cx="5" cy="8" r="4" stroke="#e08a62" /><circle cx="4" cy="16" r="4" /><circle cx="12" cy="20" r="4" /><circle cx="12" cy="13" r="7" stroke="none" /><path d="M7 13h4q0-3-2-2-3 2-1 4h3l3-5v5l4-5" fill="none" stroke="#2f8fd0" /></g>,
  <path d="M0 6h6l3 11 3-11h5l-3 7M13 9l3 9L22 6h-5" fill="none" stroke="#e53a22" strokeWidth="3.500" />,
  <><path d="m6 2 16 2-4 20H0z" fill="#7dbccb" /><path d="m6 2 16 2-1 3L5 5z" fill="#dfe7ea" /><path d="m22 4 1 20h-5z" fill="#d8cfae" /></>,
]

const Taskbar = () => (
  <div className="flex h-7 shrink-0 items-start overflow-hidden bg-linear-to-r from-[#d3e7ee] via-[#ebebeb] via-30% to-[#cfdcec]">
    <button aria-label="开始菜单" className="flex h-10 w-12 items-center justify-center">
      <svg viewBox="0 0 16 16" className="size-4" aria-hidden="true"><path d="m0 2.300 6.500-.9v6.200H0zM7.500 1.200 16 0v7.600H7.500zM0 8.500h6.500v6.200L0 13.800zM7.500 8.500H16V16l-8.500-1.200z" /></svg>
    </button>
    <label className="flex h-10 w-72 items-center border border-[#c9c9c9] bg-white pl-3 text-sm">
      <Icon size="size-4" box="0 0 16 16"><circle cx="10" cy="6" r="5" /><path d="M6.500 9.500 0 16" /></Icon>
      <input aria-label="搜索" placeholder="搜索" className="ml-3 w-40 bg-transparent placeholder:text-[#333]" />
    </label>
    <div className="ml-0.5 flex">
      {apps.map((art, i) => (
        <button key={i} aria-label={`应用 ${i + 1}`} className={clsx("flex h-10 w-[49px] justify-center pt-2", i === 13 && "bg-[#f8f8f8]")}>
          <svg viewBox="0 0 24 24" className="size-6">{art}</svg>
        </button>
      ))}
    </div>
    <div className="ml-auto flex h-10 items-center gap-2 pr-[22px] text-black">
      <Icon size="size-3.5" box="0 0 14 14"><path d="m1 9 6-6 6 6" strokeWidth="1.500" /></Icon>
      <S><rect x="5" y="0" width="6" height="10" rx="3" fill="currentColor" /><path d="M2.500 7q0 5 5.500 5t5.500-5M8 12v4" /></S>
      <S><path d="M1 2.500h14v11H1zM4 9q1-4 4-3M12 7q-1 4-4 3" /><circle cx="13" cy="13" r="3.500" fill="#f59a1b" stroke="none" /></S>
      <S><path d="M1 15Q2 3 14 1M4 15Q5 6 14 4.500M7 15q1-6 7-7M10 15q.5-3 4-4" /></S>
      <S><path d="M1 5.500h3L8 2v12l-4-3.500H1zM10 5.500q2 2.500 0 5M12 3.500q4 4.500 0 9" /></S>
      <span className="text-sm">中</span>
      <div className="mr-3 ml-2 text-center text-xs leading-[18px]">
        <p>23:03</p>
        <p>2024/6/27</p>
      </div>
      <S><path d="M0 1h16v11H6l-3 3v-3H0z" fill="currentColor" /><path d="M3 4.500h10M3 8h10" stroke="#fff" /></S>
    </div>
  </div>
)

/* ---------- capture frame drawn above the desktop ---------- */

const CaptureFrame = () => (
  <div className="pointer-events-none">
    <div className="absolute top-14 left-0 h-[5px] w-7 bg-[#109bf5]" />
    <div className="absolute top-[60px] right-[72px] left-8 h-px bg-[repeating-linear-gradient(90deg,#2b9ad6_0_6px,transparent_6px_16px)]" />
    <div className="absolute top-14 right-[37px] h-[5px] w-8 bg-[#109bf5]" />
    <div className="absolute top-14 right-[37px] h-[33px] w-1 bg-[#109bf5]" />
    <div className="absolute top-[85px] right-10 bottom-[55px] w-px bg-[repeating-linear-gradient(180deg,#2b9ad6_0_6px,transparent_6px_16px)]" />
    <div className="absolute right-[37px] bottom-7 h-[27px] w-1 bg-[#109bf5]" />
  </div>
)

const App = () => {
  return (
    <div className="relative flex h-screen w-full flex-col overflow-hidden bg-linear-to-r from-[#e2ebf0] to-[#e1e5ed] font-['Noto_Sans','Noto_Sans_CJK_SC',sans-serif] text-[#22272b]">
      <TitleBar />
      <MenuRow />
      <Ribbon />
      <div className="flex min-h-0 flex-1">
        <Sidebar />
        <Workspace />
      </div>
      <StatusBar />
      <Taskbar />
      <CaptureFrame />
      <p className="absolute right-[14px] bottom-1 text-xl leading-7 whitespace-nowrap text-[#b9bdc2] [text-shadow:1px_1px_1px_#666,-1px_-1px_0_#f4f4f4]">
        CSDN @云谱科技工作室计算机毕设
      </p>
    </div>
  )
}

export default App
